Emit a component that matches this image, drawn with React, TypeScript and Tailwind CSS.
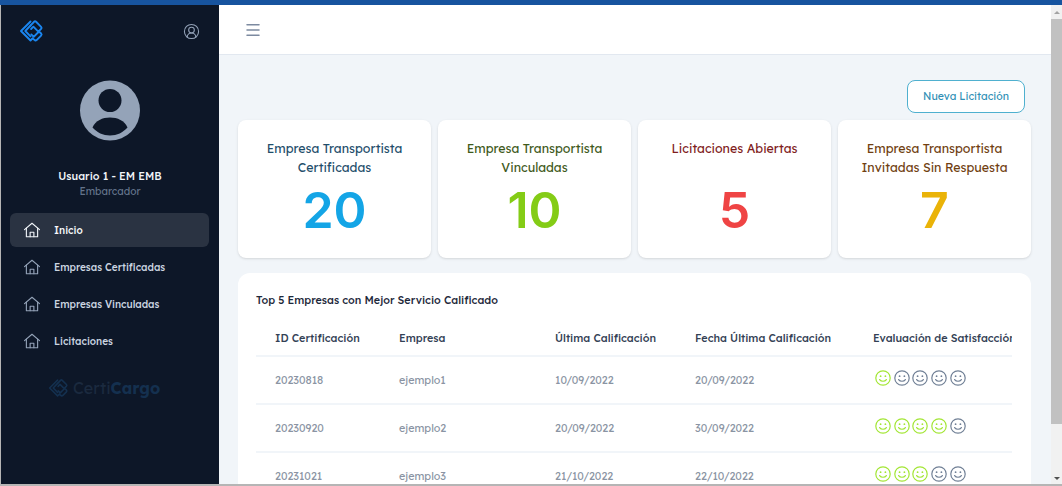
import { Menu, CircleUserRound } from "lucide-react";

const font = { fontFamily: "Lexend, Inter, sans-serif" };

const cards = [
  { title: ["Empresa Transportista", "Certificadas"], value: "20", titleColor: "text-[#1f4e6b]", color: "text-[#14a5e6]" },
  { title: ["Empresa Transportista", "Vinculadas"], value: "10", titleColor: "text-[#3f5a1c]", color: "text-[#84cc16]" },
  { title: ["Licitaciones Abiertas"], value: "5", titleColor: "text-[#7f1d1d]", color: "text-[#ef4444]" },
  { title: ["Empresa Transportista", "Invitadas Sin Respuesta"], value: "7", titleColor: "text-[#713f12]", color: "text-[#eab308]" },
];

const rows = [
  { id: "20230818", name: "ejemplo1", last: "10/09/2022", date: "20/09/2022", score: 1 },
  { id: "20230920", name: "ejemplo2", last: "20/09/2022", date: "30/09/2022", score: 4 },
  { id: "20231021", name: "ejemplo3", last: "21/10/2022", date: "22/10/2022", score: 3 },
];

const nav = ["Inicio", "Empresas Certificadas", "Empresas Vinculadas", "Licitaciones"];

const Logo = ({ className }: { className: string }) => (
  <svg viewBox="0 0 24 24" className={className} fill="none" stroke="currentColor" strokeWidth="1.9" strokeLinecap="round" strokeLinejoin="round">
    <path d="M11.500 2.500 2 12l9.500 9.500 2-2" />
    <path d="M11.500 6.500 6.300 12l5.200 5.300" />
    <path d="M11.500 6.500l3.500-3.700a1.500 1.500 0 0 1 2.100 0l5 5a1.500 1.500 0 0 1 0 2.100l-1.700 1.700a1.500 1.500 0 0 1-2.100 0l-3.900-3.900-2.300 2.300" />
    <path d="M13.500 19.500l2.500 1.800a1.500 1.500 0 0 0 1.600-.200l4.500-4.500a1.500 1.500 0 0 0 0-2.100l-1-1a1.500 1.500 0 0 0-2.100 0l-4.300 4.300-2.400-2.400" />
  </svg>
);

const HomeIcon = ({ className }: { className: string }) => (
  <svg viewBox="0 0 24 24" className={className} fill="none" stroke="currentColor" strokeWidth="1.5" strokeLinecap="round" strokeLinejoin="round">
    <path d="M2 11.500 12 3l10 8.500" />
    <path d="M4.500 9.500V21h15V9.500" />
    <path d="M9.500 21v-6h5v6" />
  </svg>
);

const Smiley = ({ on }: { on: boolean }) => (
  <svg viewBox="0 0 16 16" className={on ? "w-4 h-4 text-[#a3e635]" : "w-4 h-4 text-[#718096]"} fill="none" stroke="currentColor" strokeWidth="1.2">
    <circle cx="8" cy="8" r="7.200" />
    <circle cx="5.600" cy="6.200" r="0.900" fill="currentColor" stroke="none" />
    <circle cx="10.400" cy="6.200" r="0.900" fill="currentColor" stroke="none" />
    <path d="M4.600 9.600c1.600 2.200 5.200 2.200 6.800 0" strokeLinecap="round" />
  </svg>
);

const Sidebar = () => (
  <aside className="w-[218px] shrink-0 bg-[#0d1728] flex flex-col">
    <div className="flex items-center justify-between pl-[17px] pr-[19px] pt-[14px]">
      <Logo className="w-[26px] h-[24px] text-[#1a86f0]" />
      <CircleUserRound className="w-[17px] h-[17px] text-[#94a3b8]" strokeWidth={1.5} />
    </div>
    <div className="flex flex-col items-center mt-[37px]">
      <svg viewBox="0 0 60 60" className="w-[60px] h-[61px]">
        <circle cx="30" cy="30" r="30" fill="#94a3b8" />
        <circle cx="30" cy="20" r="11.500" fill="#0d1728" />
        <path d="M12.500 47c3-7 10-10 17.500-10s14.500 3 17.500 10c-4.500 5-10.500 8-17.500 8s-13-3-17.500-8z" fill="#0d1728" />
      </svg>
      <p className="mt-[26px] text-[10.750px] leading-[18px] font-medium text-[#f1f5f9]">Usuario 1 - EM EMB</p>
      <p className="mt-[-2px] text-[10.200px] leading-[17px] text-[#64748b]">Embarcador</p>
    </div>
    <nav className="mt-[13px] pl-[9px] pr-[10px] flex flex-col gap-[3px]">
      {nav.map((item, i) => (
        <div
          key={item}
          className={`h-[34px] rounded-md flex items-center pl-[13px] gap-[13px] text-[10px] font-medium ${
            i === 0 ? "bg-[#2a3342] text-[#f8fafc]" : "text-[#cbd5e1]"
          }`}
        >
          <HomeIcon className={`w-[18px] h-[18px] ${i === 0 ? "text-[#f1f5f9]" : "text-[#94a3b8]"}`} />
          {item}
        </div>
      ))}
    </nav>
    <div className="mt-[20px] pl-[46px] flex items-center gap-[4px] text-[#1b2a3f]">
      <Logo className="w-[22px] h-[20px] text-[#14304f]" />
      <span className="text-[16px] leading-[20px]">
        Certi<span className="font-bold text-[#14304f]">Cargo</span>
      </span>
    </div>
  </aside>
);

const Scrollbar = () => (
  <div className="w-[11px] shrink-0 bg-[#f1f1f1] flex flex-col items-center">
    <div className="h-[14px] flex items-center justify-center">
      <div className="border-x-[3px] border-x-transparent border-b-[3px] border-b-[#a3a3a3]" />
    </div>
    <div className="w-full h-[405px] bg-[#c1c1c1]" />
    <div className="flex-1 flex items-end justify-center pb-[4px]">
      <div className="border-x-[3px] border-x-transparent border-t-[3px] border-t-[#505050]" />
    </div>
  </div>
);

const App = () => (
  <div className="h-[486px] w-[1062px] overflow-hidden flex flex-col bg-white" style={font}>
    <div className="h-[5px] shrink-0 bg-[#17549f]" />
    <div className="flex-1 min-h-0 flex border-l border-l-[#b5b5b5] border-b-2 border-b-[#b5b5b5]">
      <Sidebar />
      <div className="flex-1 min-w-0 flex flex-col bg-[#f1f5f9] overflow-hidden">
        <header className="h-[50px] shrink-0 bg-white border-b border-b-[#e2e8f0] flex items-center pl-[25px]">
          <Menu className="w-[18px] h-[18px] text-[#7c8aa0]" strokeWidth={2} />
        </header>
        <main className="pl-[19px] pr-[20px]">
          <div className="flex justify-end pt-[25px] pr-[6px]">
            <button className="w-[118px] h-[33px] rounded-lg bg-white border-[1.500px] border-[#4fb0cf] text-[10.500px] text-[#2f8fb5]">
              Nueva Licitación
            </button>
          </div>
          <div className="mt-[7px] grid grid-cols-4 gap-[7px]">
            {cards.map((c) => (
              <div key={c.value} className="h-[138px] bg-white rounded-lg shadow-sm pt-[20px] flex flex-col items-center">
                <div className={`h-[37px] text-center text-[12.400px] leading-[18.500px] ${c.titleColor}`}>
                  {c.title.map((t) => (
                    <p key={t}>{t}</p>
                  ))}
                </div>
                <p className={`mt-[3px] font-['Inter'] text-[50px] leading-[60px] font-semibold ${c.color}`}>{c.value}</p>
              </div>
            ))}
          </div>
          <section className="mt-[15px] bg-white rounded-xl pt-[19px] pl-[18px] pr-[19px] pb-[20px]">
            <h2 className="text-[10.750px] leading-[16px] font-medium text-[#1e293b]">
              Top 5 Empresas con Mejor Servicio Calificado
            </h2>
            <div className="mt-[13px] overflow-hidden">
              <table className="w-[800px] table-fixed text-left text-[10.750px]">
                <colgroup>
                  <col className="w-[124px]" />
                  <col className="w-[156px]" />
                  <col className="w-[140px]" />
                  <col className="w-[178px]" />
                  <col />
                </colgroup>
                <thead>
                  <tr className="h-[35px] border-b-2 border-b-[#f1f5f9] text-[#334155] font-medium">
                    <th className="pl-[19px] font-medium whitespace-nowrap">ID Certificación</th>
                    <th className="pl-[19px] font-medium whitespace-nowrap">Empresa</th>
                    <th className="pl-[19px] font-medium whitespace-nowrap">Última Calificación</th>
                    <th className="pl-[19px] font-medium whitespace-nowrap">Fecha Última Calificación</th>
                    <th className="pl-[19px] font-medium whitespace-nowrap">Evaluación de Satisfacción</th>
                  </tr>
                </thead>
                <tbody className="text-[#8a94a3]">
                  {rows.map((r) => (
                    <tr key={r.id} className="h-[48px] border-b-2 border-b-[#f1f5f9]">
                      <td className="pl-[19px]">{r.id}</td>
                      <td className="pl-[19px]">{r.name}</td>
                      <td className="pl-[19px]">{r.last}</td>
                      <td className="pl-[19px]">{r.date}</td>
                      <td className="pl-[19px]">
                        <div className="flex gap-[2.700px] ml-[2px] mb-[4px]">
                          {[0, 1, 2, 3, 4].map((n) => (
                            <Smiley key={n} on={n < r.score} />
                          ))}
                        </div>
                      </td>
                    </tr>
                  ))}
                </tbody>
              </table>
            </div>
          </section>
        </main>
      </div>
      <Scrollbar />
    </div>
  </div>
);

export default App;
